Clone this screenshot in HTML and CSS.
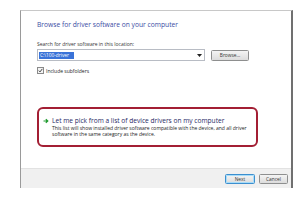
FILE: index.html
```html
<!DOCTYPE html>
<html>
<head>
<meta charset="utf-8">
<link rel="stylesheet" href="styles.css">
</head>
<body>
<div class="window">
  <div class="content">
    <div class="title">Browse for driver software on your computer</div>
    <div class="label">Search for driver software in this location:</div>
    <div class="row">
      <div class="combo">
        <span class="sel">C:\100-driver</span>
        <svg class="arrow" width="5" height="3" viewBox="0 0 5 3"><path d="M0 0H5L2.5 3Z" fill="#222"/></svg>
      </div>
      <div class="btn browse">Browse...</div>
    </div>
    <div class="check">
      <span class="box"><svg width="5" height="5" viewBox="0 0 5 5"><path d="M0.8 2.6L2 3.9L4.3 0.9" fill="none" stroke="#333" stroke-width="0.9"/></svg></span>
      <span>Include subfolders</span>
    </div>
    <div class="option">
      <svg class="garrow" width="6" height="6" viewBox="0 0 6 6"><path d="M0.5 3H4.5M2.8 1.2L4.8 3L2.8 4.8" fill="none" stroke="#1e9a2e" stroke-width="1.2"/></svg>
      <div class="otext">
        <div class="ohead">Let me pick from a list of device drivers on my computer</div>
        <div class="odesc">This list will show installed driver software compatible with the device, and all driver software in the same category as the device.</div>
      </div>
    </div>
  </div>
  <div class="footer">
    <div class="btn next">Next</div>
    <div class="btn cancel">Cancel</div>
  </div>
</div>
</body>
</html>
```

FILE: styles.css
```css
html, body { margin: 0; padding: 0; background: #fff; }
body { font-family: "Open Sans", "Noto Sans", sans-serif; color: #222; }
.window {
  margin: 10px 0 0 20px;
  height: 178px;
  box-sizing: border-box;
  width: 273px;
  border-left: 1px solid #9a9a9a;
  border-top: 1px solid #c8c8c8;
  border-right: 2px solid #707070;
  display: flex;
  flex-direction: column;
}
.content { flex: 1; padding: 9px 0 0 16px; }
.title { font-size: 6.7px; line-height: 10px; color: #3a4ca3; }
.label { margin-top: 11px; font-size: 5px; line-height: 6px; color: #333; }
.row { display: flex; align-items: center; gap: 6px; margin-top: 2px; }
.combo {
  width: 168px; height: 12px; box-sizing: border-box;
  border: 1px solid #b8bcc4; display: flex; align-items: center; justify-content: space-between;
  padding: 0 2px 0 1px;
}
.sel { background: #3a73d8; color: #fff; font-size: 4.8px; line-height: 7px; padding: 0 1px; width: 33px; white-space: nowrap; overflow: hidden; }
.btn {
  box-sizing: border-box; border: 1px solid #8e8f8f; border-radius: 1.5px;
  background: linear-gradient(#f4f4f4, #dcdcdc);
  font-size: 4.8px; display: flex; align-items: center; justify-content: center; color: #333;
}
.browse { width: 38px; height: 11px; }
.check { display: flex; align-items: center; gap: 2px; margin-top: 6px; font-size: 5px; line-height: 6px; }
.box { width: 5px; height: 5px; border: 1px solid #8a8a8a; display: flex; align-items: center; justify-content: center; background: #f4f4f4; }
.option {
  margin-top: 33px; width: 221px; height: 40px; box-sizing: border-box;
  border: 2px solid #a31f34; border-radius: 6px;
  display: flex; align-items: flex-start; gap: 3px; padding: 7px 0 0 4px;
}
.garrow { margin-top: 2px; flex: none; }
.ohead { font-size: 6.6px; line-height: 9px; color: #1f2a66; }
.odesc { font-size: 5px; line-height: 6.4px; color: #222; width: 200px; }
.footer {
  height: 20px; box-sizing: border-box; background: #f0f0f0; border-top: 1px solid #e2e2e2;
  display: flex; justify-content: flex-end; align-items: center; gap: 4px; padding: 0 3px 0 0;
}
.next { width: 30px; height: 10px; border-color: #3c8fcf; box-shadow: inset 0 0 0 1px #a8dcf8; }
.cancel { width: 29px; height: 10px; }
```
